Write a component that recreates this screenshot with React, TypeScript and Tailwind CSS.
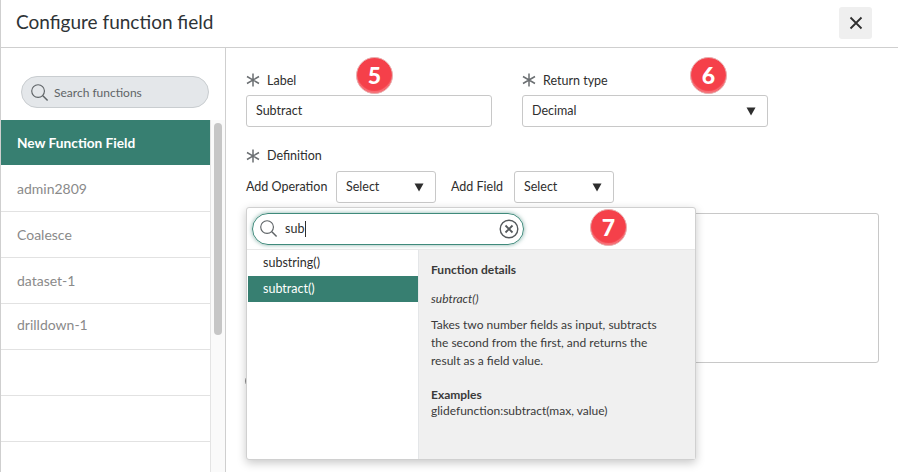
const font = { fontFamily: '"Lato", "Noto Sans", sans-serif' };

function Star() {
  return (
    <svg width="14" height="14" viewBox="0 0 14 14" className="shrink-0" stroke="#6b6f72" strokeWidth="1.5" fill="none">
      <path d="M7 0.5V13.5M1 3.5L13 10.5M13 3.5L1 10.5" />
    </svg>
  );
}

function Caret() {
  return (
    <svg width="10" height="9" viewBox="0 0 10 9" className="shrink-0">
      <path d="M0.5 0.5H9.5L5 8.5Z" fill="#2e2e2e" />
    </svg>
  );
}

function Search({ size = 20 }: { size?: number }) {
  return (
    <svg width={size} height={size} viewBox="0 0 20 20" fill="none" stroke="#5f6467" className="shrink-0">
      <circle cx="8.5" cy="8.5" r="6.7" strokeWidth="1.2" />
      <path d="M13.5 13.5L18.5 18.5" strokeWidth="1.6" />
    </svg>
  );
}

function Badge({ n, className }: { n: string; className: string }) {
  return (
    <div className={`absolute flex h-[37px] w-[37px] items-center justify-center rounded-full border border-[#e8b0b0] bg-[#f5404a] text-[23px] font-black text-white shadow-[inset_0_-2px_1px_rgba(255,255,255,0.25)] ${className}`}>
      {n}
    </div>
  );
}

function Select({ className }: { className: string }) {
  return (
    <div className={`flex h-8 items-center justify-between rounded-[3px] border border-[#c8c8c8] bg-white pl-[9px] pr-[11px] text-[12.5px] text-[#2e2e2e] ${className}`}>
      <span>Select</span>
      <Caret />
    </div>
  );
}

function FieldLabel({ children, low }: { children: string; low?: boolean }) {
  return (
    <div className="flex h-[14px] items-center gap-[7px] text-[12.5px] leading-none text-[#2e2e2e]">
      <Star />
      <span className={low ? "pt-[2px]" : ""}>{children}</span>
    </div>
  );
}

export default function App() {
  const rows = ["admin2809", "Coalesce", "dataset-1", "drilldown-1", "", "", ""];
  return (
    <div style={font} className="flex h-[472px] w-[898px] flex-col overflow-hidden border-l border-[#cfcfcf] bg-white">
      <header className="flex h-[48px] shrink-0 items-center justify-between border-b border-[#cfcfcf] pb-[2px] pl-[15px] pr-[26px]">
        <h1 className="mb-px text-[19px] font-normal text-[#2e3336]">Configure function field</h1>
        <button className="flex h-8 w-[33px] items-center justify-center rounded-[3px] bg-[#efefef]">
          <svg width="14" height="14" viewBox="0 0 14 14" stroke="#2e2e2e" strokeWidth="1.8">
            <path d="M1.5 1.5L12.5 12.5M12.5 1.5L1.5 12.5" />
          </svg>
        </button>
      </header>

      <div className="flex min-h-0 flex-1">
        <aside className="flex w-[225px] shrink-0 flex-col border-r border-[#cfcfcf]">
          <div className="pl-5 pt-[28px]">
            <div className="flex h-8 w-[188px] items-center gap-[5px] rounded-full border border-[#c9cdd0] bg-[#e4e7ea] pl-2 text-[12px] text-[#5f6467]">
              <Search size={19} />
              <span className="pt-px">Search functions</span>
            </div>
          </div>
          <div className="mt-3 flex min-h-0 flex-1 overflow-hidden">
            <div className="w-[210px] shrink-0 border-r border-[#e4e4e4]">
              <div className="flex h-[45px] items-center bg-[#377f71] pl-4 pt-[2px] text-[13.7px] font-bold text-white">New Function Field</div>
              <div className="pt-px">
                {rows.map((r, i) => (
                  <div key={i} className={`flex h-[46px] items-center border-b border-[#e2e2e2] pl-4 text-[14px] text-[#8a8a8a] ${i === 3 ? "pb-[4px]" : ""}`}>
                    {r}
                  </div>
                ))}
              </div>
            </div>
            <div className="flex-1 bg-[#fafafa] pl-[3px] pt-[3px]">
              <div className="h-[212px] w-2 rounded-[4px] bg-[#c6c6c6]" />
            </div>
          </div>
        </aside>

        <main className="relative flex-1 pl-5 pt-[25px]">
          <div className="flex gap-[30px]">
            <div className="w-[246px]">
              <FieldLabel low>Label</FieldLabel>
              <div className="mt-[8px] flex h-8 items-center rounded-[3px] border border-[#c8c8c8] pl-[9px] pt-px text-[12.5px] text-[#2e2e2e]">Subtract</div>
            </div>
            <div className="w-[246px]">
              <FieldLabel low>Return type</FieldLabel>
              <div className="mt-[8px] flex h-8 items-center justify-between rounded-[3px] border border-[#c8c8c8] pl-[9px] pr-[11px] pt-px text-[12.5px] text-[#2e2e2e]">
                <span>Decimal</span>
                <Caret />
              </div>
            </div>
          </div>

          <div className="mt-[22px]">
            <FieldLabel>Definition</FieldLabel>
          </div>
          <div className="mt-[8px] flex items-center text-[12.5px] text-[#2e2e2e]">
            <span className="w-[90px] whitespace-nowrap">Add Operation</span>
            <Select className="w-[100px]" />
            <span className="w-[78px] whitespace-nowrap pl-[15px]">Add Field</span>
            <Select className="w-[100px]" />
          </div>
          <div className="mt-[10px] h-[150px] w-[633px] rounded-[3px] border border-[#c8c8c8]" />
          <div className="-ml-px mt-[11px] h-3.5 w-3.5 rounded-full border border-[#8a8a8a]" />

          <div className="absolute left-[20px] top-[159px] h-[253px] w-[450px] rounded-[3px] border border-[#d0d0d0] bg-white shadow-[0_3px_10px_rgba(0,0,0,0.22)]">
            <div className="flex h-[42px] items-center border-b border-[#e8e8e8] pl-[5px]">
              <div className="flex h-[32px] w-[272px] items-center rounded-full border border-[#3f8a7b] pl-[6px] pr-[4px] text-[12.5px] text-[#2e2e2e] shadow-[0_0_4px_rgba(55,127,113,0.6)]">
                <Search size={19} />
                <span className="ml-[7px] border-r border-[#2e2e2e] pr-px leading-[16px]">sub</span>
                <svg width="20" height="20" viewBox="0 0 20 20" fill="none" stroke="#55595c" className="ml-auto">
                  <circle cx="10" cy="10" r="8.8" strokeWidth="1.4" />
                  <path d="M6.5 6.5L13.5 13.5M13.5 6.5L6.5 13.5" strokeWidth="1.8" />
                </svg>
              </div>
            </div>
            <div className="flex h-[209px]">
              <div className="w-[171px] shrink-0 pl-px text-[12.5px]">
                <div className="flex h-[26px] items-center pl-[15px] text-[#2e2e2e]">substring()</div>
                <div className="flex h-[26px] items-center bg-[#377f71] pl-[15px] text-white">subtract()</div>
              </div>
              <div className="flex-1 border-l border-[#e4e6e8] bg-[#f0f0f0] pl-3 pt-[11px] text-[12px] leading-[18px] text-[#3a3a3a]">
                <div className="font-bold">Function details</div>
                <div className="mt-[11px] italic">subtract()</div>
                <div className="mt-[8px] w-[240px]">Takes two number fields as input, subtracts the second from the first, and returns the result as a field value.</div>
                <div className="mt-[16px] font-bold">Examples</div>
                <div className="-mt-[2px]">glidefunction:subtract(max, value)</div>
              </div>
            </div>
          </div>

          <Badge n="5" className="left-[130px] top-[9px]" />
          <Badge n="6" className="left-[464px] top-[9px]" />
          <Badge n="7" className="left-[364px] top-[161px]" />
        </main>
      </div>
    </div>
  );
}
